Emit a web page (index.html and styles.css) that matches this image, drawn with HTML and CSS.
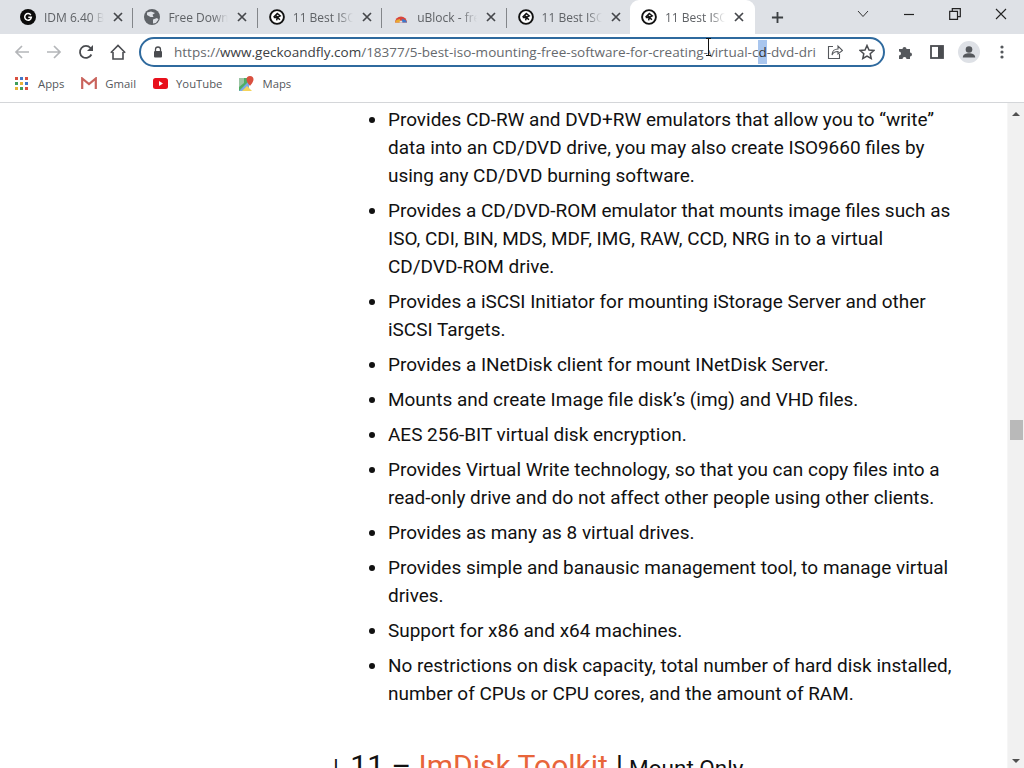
FILE: index.html
```html
<!DOCTYPE html>
<html lang="en">
<head>
<meta charset="utf-8">
<title>11 Best ISO Mounting Software</title>
<link rel="stylesheet" href="styles.css">
</head>
<body>
<svg class="defs" width="0" height="0" aria-hidden="true">
  <symbol id="gf" viewBox="0 0 16 16">
    <circle cx="8" cy="8" r="6.900" fill="#fff" stroke="#111" stroke-width="1.900"/>
    <path d="M4.600 8.300 8.300 4.400 11.200 6.800 8.400 8.400 10.900 10.800M4.800 8.400h3.600L7.600 11.400M6.400 6.400l2.600 2" fill="none" stroke="#111" stroke-width="1.500"/>
  </symbol>
  <symbol id="x" viewBox="0 0 10 10">
    <path d="M1 1l8 8M9 1l-8 8" stroke="#45474b" stroke-width="1.700" fill="none"/>
  </symbol>
</svg>
<div class="window">
  <header class="tabstrip">
    <div class="tab">
      <svg class="fav" viewBox="0 0 16 16"><circle cx="8" cy="8" r="8" fill="#0b0b0b"/><path d="M10.800 6.100A3.300 3.300 0 1 0 11.300 8.300H8.300" fill="none" stroke="#fff" stroke-width="1.500"/></svg>
      <span class="tab-title">IDM 6.40 Build</span>
      <svg class="close"><use href="#x"/></svg>
    </div>
    <div class="tab">
      <svg class="fav" viewBox="0 0 16 16"><circle cx="8" cy="8" r="8" fill="#5f6368"/><path d="M3 3.500 7 2.500 11 4 8.500 5.800 9.500 8 6.500 8 3 6zM9 10.500l4-1.500 1.500 1.500-2.700 3.500-2.800.5z" fill="#dee1e6"/></svg>
      <span class="tab-title">Free Download</span>
      <svg class="close"><use href="#x"/></svg>
    </div>
    <div class="tab">
      <svg class="fav"><use href="#gf"/></svg>
      <span class="tab-title">11 Best ISO Mou</span>
      <svg class="close"><use href="#x"/></svg>
    </div>
    <div class="tab">
      <svg class="fav" viewBox="0 0 16 16"><path d="M6 2h4l1.500 5h-7z" fill="#e3e1de"/><path d="M2 13.500a6 6 0 0 1 12 0z" fill="#d9453a"/><path d="M2 13.500a6 4 0 0 1 5-3.500v3.500z" fill="#e8a92f"/><path d="M9 10a6 4 0 0 1 5 3.500H9z" fill="#3f78c9"/><path d="M6.500 13.500a1.500 2 0 0 1 3 0z" fill="#dee1e6"/></svg>
      <span class="tab-title">uBlock - free</span>
      <svg class="close"><use href="#x"/></svg>
    </div>
    <div class="tab">
      <svg class="fav"><use href="#gf"/></svg>
      <span class="tab-title">11 Best ISO Mou</span>
      <svg class="close"><use href="#x"/></svg>
    </div>
    <div class="tab tab-active">
      <svg class="fav"><use href="#gf"/></svg>
      <span class="tab-title">11 Best ISO Mou</span>
      <svg class="close"><use href="#x"/></svg>
    </div>
    <svg class="newtab" viewBox="0 0 14 14"><path d="M7 1v12M1 7h12" stroke="#3c4043" stroke-width="2" fill="none"/></svg>
    <div class="winctl">
      <svg class="wc wc-chev" viewBox="0 0 12 8"><path d="M1 1l5 5.500L11 1" fill="none" stroke="#333" stroke-width="1"/></svg>
      <svg class="wc wc-min" viewBox="0 0 12 12"><path d="M1 6.500h10" stroke="#222" stroke-width="1.200"/></svg>
      <svg class="wc wc-max" viewBox="0 0 12 12"><path d="M.7 3.300h7.800v8H.7zM3.300 3V.7h8v8H8.800" fill="none" stroke="#222" stroke-width="1.200"/></svg>
      <svg class="wc wc-cls" viewBox="0 0 12 12"><path d="M1 1l10 10M11 1L1 11" stroke="#222" stroke-width="1.100" fill="none"/></svg>
    </div>
  </header>

  <nav class="toolbar">
    <svg class="tb tb-first" viewBox="0 0 16 16"><path d="M15 8H2M8 2 2 8l6 6" fill="none" stroke="#b4b6b9" stroke-width="1.700"/></svg>
    <svg class="tb" viewBox="0 0 16 16"><path d="M1 8h13M8 2l6 6-6 6" fill="none" stroke="#b4b6b9" stroke-width="1.700"/></svg>
    <svg class="tb" viewBox="0 0 16 16"><path d="M13.400 10.500A6 6 0 1 1 12.500 4L14 5.500" fill="none" stroke="#4a4c50" stroke-width="1.800"/><path d="M15 1v6H9z" fill="#4a4c50"/></svg>
    <svg class="tb" viewBox="0 0 16 16"><path d="M3 8v7h10V8M.8 8.700 8 1.500l7.200 7.200" fill="none" stroke="#4a4c50" stroke-width="1.600"/></svg>
    <div class="omnibox">
      <svg class="lock" viewBox="0 0 10 12"><path d="M2.500 5V3.500a2.500 2.500 0 0 1 5 0V5" fill="none" stroke="#4a4c50" stroke-width="1.300"/><rect x="1" y="5" width="8" height="6.500" rx="1" fill="#4a4c50"/></svg>
      <div class="url"><span class="url-dim">https://</span>www.geckoandfly.com<span class="url-dim">/18377/5-best-iso-mounting-free-software-for-creating-virtual-c<mark class="sel">d</mark>-dvd-dri</span></div>
      <svg class="omni-ico omni-share" viewBox="0 0 16 16"><path d="M6 2.500H1.500v12h11V10M5 11c0-4 3-6 6-6V2l4.500 4.500L11 10V7.500c-3 0-5 1-6 3.500z" fill="none" stroke="#55585c" stroke-width="1.100"/></svg>
      <svg class="omni-ico" viewBox="0 0 16 16"><path d="M8 1.500l2 4.500 4.800.5-3.600 3.200 1 4.800L8 12l-4.200 2.500 1-4.800L1.200 6.500 6 6z" fill="none" stroke="#4a4c50" stroke-width="1.500"/></svg>
    </div>
    <svg class="tb tb-puzzle" viewBox="0 0 16 16"><path d="M1 5h3.500a2 2 0 1 1 4 0H12v3.500a2 2 0 1 1 0 4V15H8.500a2 2 0 1 0-4 0H1v-3.500a2 2 0 1 0 0-4z" fill="#55585c"/></svg>
    <svg class="tb tb-side" viewBox="0 0 14 14"><rect x="1" y="1" width="12" height="12" fill="none" stroke="#4a4c50" stroke-width="1.800"/><rect x="8" y="1" width="5" height="12" fill="#4a4c50"/></svg>
    <svg class="avatar" viewBox="0 0 22 22"><circle cx="11" cy="11" r="11" fill="#dee1e6"/><circle cx="11" cy="8.500" r="3.300" fill="#55585c"/><path d="M4.800 16.500c0-3 3-4.300 6.200-4.300s6.200 1.300 6.200 4.300z" fill="#55585c"/></svg>
    <svg class="tb-menu" viewBox="0 0 4 14"><circle cx="2" cy="2" r="1.600" fill="#55585c"/><circle cx="2" cy="7" r="1.600" fill="#55585c"/><circle cx="2" cy="12" r="1.600" fill="#55585c"/></svg>
  </nav>

  <div class="bookmarks">
    <div class="bm">
      <svg class="bm-ico" viewBox="0 0 13 13">
        <path d="M0 0h3v3H0z" fill="#d9503f"/><path d="M5 0h3v3H5z" fill="#3f78c9"/><path d="M10 0h3v3h-3z" fill="#d9503f"/>
        <path d="M0 5h3v3H0z" fill="#3f9d5a"/><path d="M5 5h3v3H5z" fill="#e8b23a"/><path d="M10 5h3v3h-3z" fill="#3f78c9"/>
        <path d="M0 10h3v3H0z" fill="#e8b23a"/><path d="M5 10h3v3H5z" fill="#3f9d5a"/><path d="M10 10h3v3h-3z" fill="#d9503f"/>
      </svg>Apps
    </div>
    <div class="bm">
      <svg class="bm-ico bm-gmail" viewBox="0 0 16 13"><path d="M1.200 12V1.500L8 7l6.800-5.500V12" fill="none" stroke="#c9635c" stroke-width="2.200"/></svg>Gmail
    </div>
    <div class="bm">
      <svg class="bm-ico bm-yt" viewBox="0 0 15 11"><rect width="15" height="11" rx="2.500" fill="#e8101c"/><path d="M6 3l4 2.500L6 8z" fill="#fff"/></svg>YouTube
    </div>
    <div class="bm">
      <svg class="bm-ico bm-maps" viewBox="0 0 15 15"><path d="M0 2h10v13H0z" fill="#4fae63"/><path d="M0 15 10 5v10z" fill="#7ba9ea"/><path d="M3 15l5-5 5 5z" fill="#f4d35a"/><path d="M0 2h5v5L0 11z" fill="#9cc5a5"/><path d="M11 0a3.500 3.500 0 0 1 3.500 3.500C14.500 6 11 10 11 10S7.500 6 7.500 3.500A3.500 3.500 0 0 1 11 0z" fill="#d9503f"/></svg>Maps
    </div>
  </div>

  <div class="viewport">
    <main class="page">
      <ul class="features">
        <li>Provides CD-RW and DVD+RW emulators that allow you to “write” data into an CD/DVD drive, you may also create ISO9660 files by using any CD/DVD burning software.</li>
        <li>Provides a CD/DVD-ROM emulator that mounts image files such as ISO, CDI, BIN, MDS, MDF, IMG, RAW, CCD, NRG in to a virtual CD/DVD-ROM drive.</li>
        <li>Provides a iSCSI Initiator for mounting iStorage Server and other iSCSI Targets.</li>
        <li>Provides a INetDisk client for mount INetDisk Server.</li>
        <li>Mounts and create Image file disk’s (img) and VHD files.</li>
        <li>AES 256-BIT virtual disk encryption.</li>
        <li>Provides Virtual Write technology, so that you can copy files into a read-only drive and do not affect other people using other clients.</li>
        <li>Provides as many as 8 virtual drives.</li>
        <li>Provides simple and banausic management tool, to manage virtual drives.</li>
        <li>Support for x86 and x64 machines.</li>
        <li>No restrictions on disk capacity, total number of hard disk installed, number of CPUs or CPU cores, and the amount of RAM.</li>
      </ul>
      <h2 class="title"><span class="bar">|</span> 11 – <a class="title-link">ImDisk Toolkit</a> <span class="bar2">|</span> <small class="title-sub">Mount Only</small></h2>
    </main>
    <aside class="scrollbar">
      <span class="arrow-up"></span>
      <span class="thumb"></span>
      <span class="arrow-down"></span>
    </aside>
  </div>
  <svg class="ibeam" viewBox="0 0 7 18"><path d="M1 .5h5M3.500.5v17M1 17.500h5" stroke="#111" stroke-width="1" fill="none"/></svg>
</div>
</body>
</html>
```
FILE: styles.css
```css
* { box-sizing: border-box; }
html, body { margin: 0; height: 100%; overflow: hidden; background: #fff; }
.defs { position: absolute; }
.window { position: relative; width: 1024px; height: 768px; display: flex; flex-direction: column; font-family: "Open Sans", "Liberation Sans", sans-serif; }

.tabstrip { height: 34px; background: #dee1e6; display: flex; align-items: center; padding-left: 9px; flex: none; }
.tab { width: 124.400px; height: 34px; display: flex; align-items: center; padding: 0 12px 0 11px; position: relative; flex: none; }
.tab::after { content: ""; position: absolute; right: 0; top: 8px; height: 20px; width: 1px; background: #83868a; }
.tab:nth-child(5)::after, .tab-active::after { display: none; }
.tab-active { background: #fff; border-radius: 9px 9px 0 0; margin-left: -1px; width: 125.400px; }
.fav { width: 16px; height: 16px; flex: none; }
.tab-title { margin-left: 8px; width: 60px; flex: none; overflow: hidden; white-space: nowrap; font-size: 12px; color: #5f6266; -webkit-mask-image: linear-gradient(90deg, #000 75%, transparent); mask-image: linear-gradient(90deg, #000 75%, transparent); }
.close { width: 10px; height: 10px; margin-left: 9px; flex: none; }
.newtab { width: 13px; height: 13px; margin-left: 16px; flex: none; }
.winctl { margin-left: auto; display: flex; align-items: center; height: 28px; align-self: flex-start; }
.wc { flex: none; }
.wc-chev { width: 12px; height: 8px; margin-right: 34px; }
.wc-min { width: 12px; height: 12px; margin-right: 34px; }
.wc-max { width: 12px; height: 12px; margin-right: 34px; }
.wc-cls { width: 12px; height: 12px; margin-right: 17px; }

.toolbar { height: 34px; display: flex; align-items: center; background: #fff; flex: none; padding: 2px 0 0 14px; }
.tb { width: 16px; height: 16px; margin-right: 16px; flex: none; }
.omnibox { width: 746px; height: 30px; margin-left: -3px; border: 2.500px solid #2f6a9e; border-radius: 15px; display: flex; align-items: center; padding-left: 12px; flex: none; }
.lock { width: 10px; height: 12px; flex: none; }
.url { margin-left: 11px; width: 645px; flex: none; white-space: nowrap; overflow: hidden; font-size: 13.520px; line-height: 24px; color: #3c4043; }
.url-dim { color: #66696d; }
.sel { background: #a9c6ee; color: #333; padding: 3px 0; }
.omni-ico { width: 16px; height: 16px; flex: none; }
.omni-share { margin: 0 16px 0 8px; }
.tb-puzzle { margin-left: 13px; }
.tb-side { width: 14px; height: 14px; margin-right: 14px; }
.avatar { width: 22px; height: 22px; flex: none; margin-right: 20px; }
.tb-menu { width: 4px; height: 14px; flex: none; }

.bookmarks { height: 35px; display: flex; align-items: center; padding: 0 0 4px 15px; font-size: 11.300px; color: #54575b; border-bottom: 1px solid #d4d6d9; flex: none; }
.bm { display: flex; align-items: center; margin-right: 17px; }
.bm-ico { width: 13px; height: 13px; margin-right: 10px; flex: none; }
.bm-gmail { width: 16px; margin-right: 8px; }
.bm-yt { width: 15px; height: 11px; margin-right: 8px; }
.bm-maps { width: 15px; height: 15px; margin-right: 8px; }

.viewport { flex: 1; display: flex; overflow: hidden; min-height: 0; }
.page { flex: 1; min-width: 0; overflow: hidden; padding-left: 335px; padding-right: 50px; font-family: Roboto, "Liberation Sans", sans-serif; color: #111; }
.features { margin: 3px 0 0; padding: 0 0 0 53px; font-size: 18.970px; line-height: 28px; }
.features li { margin-bottom: 7px; }
.title { margin: 38px 0 0; font-size: 30px; line-height: 40px; font-weight: 400; white-space: nowrap; }
.bar { font-size: 24px; margin: 0 4px 0 -2px; }
.bar2 { margin: 0 -1.500px 0 .5px; }
.title-link { color: #e8653a; }
.title-sub { font-size: 22.500px; }

.scrollbar { width: 17px; background: #f1f1f1; flex: none; display: flex; flex-direction: column; align-items: center; position: relative; border-left: 1px solid #f6f6f6; }
.arrow-up { margin-top: 9px; border: 4px solid transparent; border-top: 0; border-bottom: 4px solid #505050; }
.arrow-down { position: absolute; bottom: 5px; border: 4px solid transparent; border-bottom: 0; border-top: 4px solid #505050; }
.thumb { margin-top: 304px; width: 13px; height: 20px; background: #b9b9b9; }

.ibeam { position: absolute; left: 705px; top: 38px; width: 7px; height: 18px; }
```
